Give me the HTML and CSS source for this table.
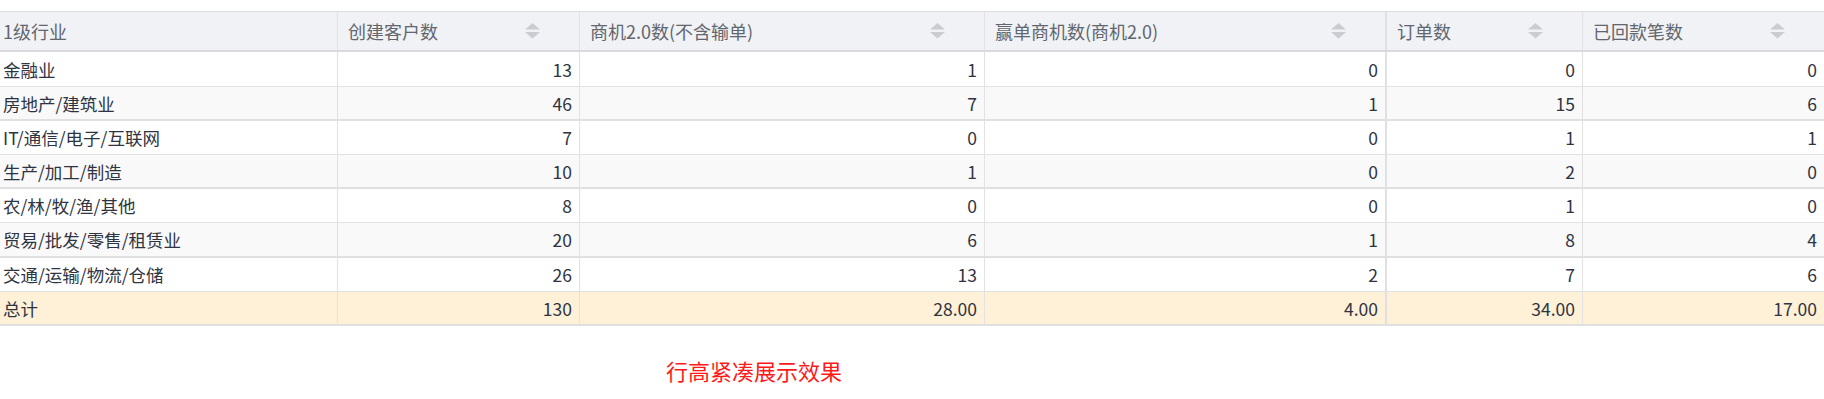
FILE: index.html
```html
<!DOCTYPE html>
<html lang="zh-CN">
<head>
<meta charset="utf-8">
<title>行高紧凑展示效果</title>
<link rel="stylesheet" href="styles.css">
</head>
<body>
<div class="page">
  <div class="grid">
    <div class="row head">
      <div class="cell first">1级行业</div>
      <div class="cell"><span>创建客户数</span><svg class="sort" viewBox="0 0 15 16" width="15" height="16"><polygon points="7.5,0 15,6.5 0,6.5"/><polygon points="0,9 15,9 7.5,15.5"/></svg></div>
      <div class="cell"><span>商机2.0数(不含输单)</span><svg class="sort" viewBox="0 0 15 16" width="15" height="16"><polygon points="7.5,0 15,6.5 0,6.5"/><polygon points="0,9 15,9 7.5,15.5"/></svg></div>
      <div class="cell split"><span>赢单商机数(商机2.0)</span><svg class="sort" viewBox="0 0 15 16" width="15" height="16"><polygon points="7.5,0 15,6.5 0,6.5"/><polygon points="0,9 15,9 7.5,15.5"/></svg></div>
      <div class="cell"><span>订单数</span><svg class="sort" viewBox="0 0 15 16" width="15" height="16"><polygon points="7.5,0 15,6.5 0,6.5"/><polygon points="0,9 15,9 7.5,15.5"/></svg></div>
      <div class="cell"><span>已回款笔数</span><svg class="sort" viewBox="0 0 15 16" width="15" height="16"><polygon points="7.5,0 15,6.5 0,6.5"/><polygon points="0,9 15,9 7.5,15.5"/></svg></div>
    </div>
    <div class="row tall">
      <div class="cell first">金融业</div><div class="cell num">13</div><div class="cell num">1</div><div class="cell num split">0</div><div class="cell num">0</div><div class="cell num">0</div>
    </div>
    <div class="row stripe">
      <div class="cell first">房地产/建筑业</div><div class="cell num">46</div><div class="cell num">7</div><div class="cell num split">1</div><div class="cell num">15</div><div class="cell num">6</div>
    </div>
    <div class="row">
      <div class="cell first">IT/通信/电子/互联网</div><div class="cell num">7</div><div class="cell num">0</div><div class="cell num split">0</div><div class="cell num">1</div><div class="cell num">1</div>
    </div>
    <div class="row stripe">
      <div class="cell first">生产/加工/制造</div><div class="cell num">10</div><div class="cell num">1</div><div class="cell num split">0</div><div class="cell num">2</div><div class="cell num">0</div>
    </div>
    <div class="row">
      <div class="cell first">农/林/牧/渔/其他</div><div class="cell num">8</div><div class="cell num">0</div><div class="cell num split">0</div><div class="cell num">1</div><div class="cell num">0</div>
    </div>
    <div class="row stripe tall">
      <div class="cell first">贸易/批发/零售/租赁业</div><div class="cell num">20</div><div class="cell num">6</div><div class="cell num split">1</div><div class="cell num">8</div><div class="cell num">4</div>
    </div>
    <div class="row">
      <div class="cell first">交通/运输/物流/仓储</div><div class="cell num">26</div><div class="cell num">13</div><div class="cell num split">2</div><div class="cell num">7</div><div class="cell num">6</div>
    </div>
    <div class="row total">
      <div class="cell first">总计</div><div class="cell num">130</div><div class="cell num">28.00</div><div class="cell num split">4.00</div><div class="cell num">34.00</div><div class="cell num">17.00</div>
    </div>
  </div>
  <p class="caption">行高紧凑展示效果</p>
</div>
</body>
</html>
```
FILE: styles.css
```css
* { box-sizing: border-box; }
html, body { margin: 0; padding: 0; background: #fff; }
body {
  font-family: "Noto Sans CJK SC", "Noto Sans", sans-serif;
  font-size: 17.5px;
  color: #2f3442;
}
.page { padding-top: 11px; }
.grid {
  width: 1825px;
  border-top: 1px solid #dcdde0;
}
.row {
  display: grid;
  grid-template-columns: 338px 242px 405px 402px 196px 242px;
  height: 34px;
  border-bottom: 1px solid #e2e2e2;
}
.row.tall { height: 35px; }
.row.stripe { background: #f9f9f9; border-bottom: 2px solid #e0e0e0; }
.row.head {
  height: 40px;
  font-size: 18px;
  background: #f1f2f5;
  color: #62666e;
  border-bottom: 2px solid #d9dadd;
}
.row.total {
  background: #fef1d8;
  border-bottom: 2px solid #e0e0e0;
}
.cell {
  display: flex;
  align-items: center;
  padding: 0 7px 0 10px;
  border-right: 1px solid #e2e2e2;
  white-space: nowrap;
  overflow: hidden;
}
.cell.split { border-right: 2px solid #dfe0e3; }
.cell.first { padding-left: 3px; }
.head .cell { justify-content: space-between; padding-right: 39px; }
.head .cell.first { justify-content: flex-start; }
.cell.num { justify-content: flex-end; }
.sort { fill: #c9ccd2; flex: none; }
.caption {
  margin: 31px 0 0 0;
  padding-left: 666px;
  font-size: 22px;
  line-height: 26px;
  color: #ff1a1a;
}
```
